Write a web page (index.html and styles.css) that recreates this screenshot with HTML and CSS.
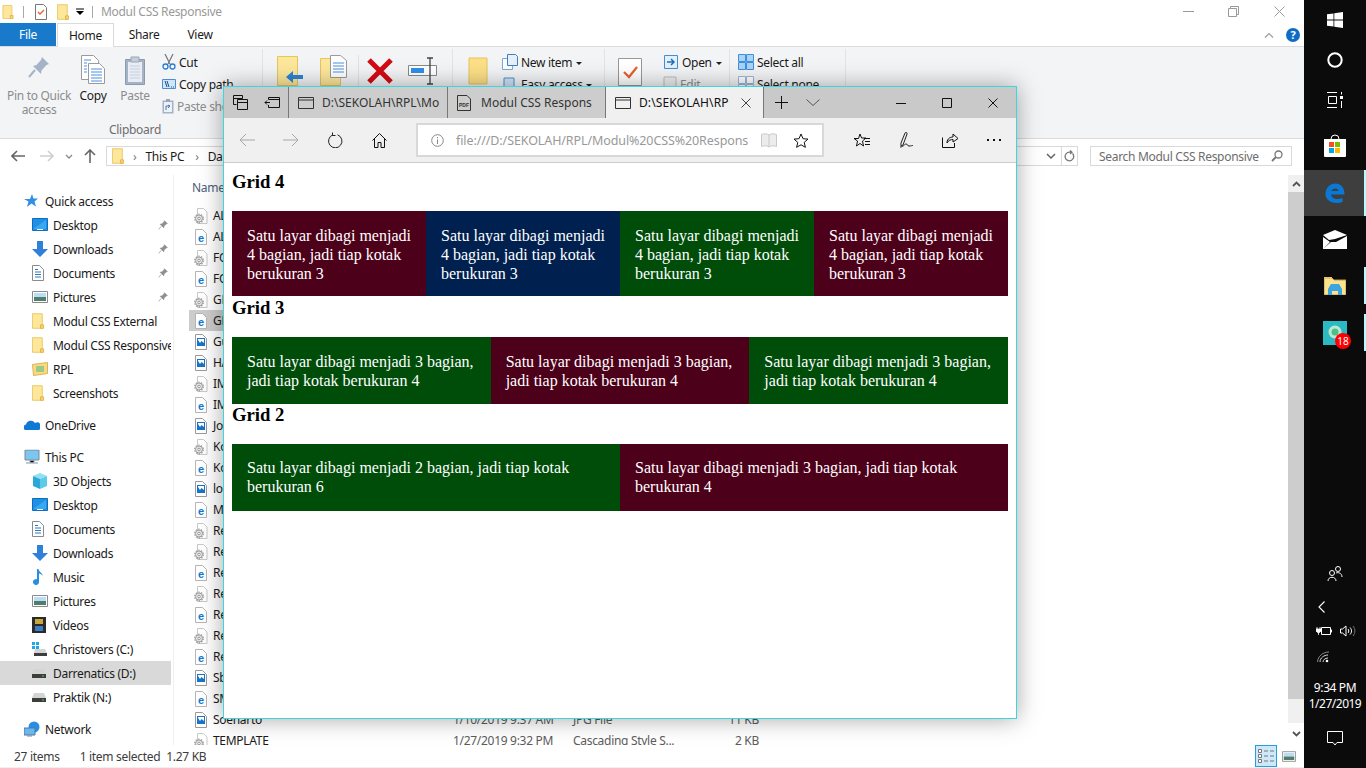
FILE: index.html
```html
<!DOCTYPE html>
<html lang="en">
<head>
<meta charset="utf-8">
<title>Modul CSS Responsive</title>
<link rel="stylesheet" href="styles.css">
</head>
<body>
<svg class="defs" width="0" height="0" aria-hidden="true">
  <symbol id="folder" viewBox="0 0 14 18"><path d="M.5.5h11.5v17H.5z" fill="#fde79b" stroke="#e8c35f"/><path d="M10 13.5h3.5v4H10z" fill="#fcd56b" stroke="#e0b040"/></symbol>
  <symbol id="gear" viewBox="0 0 14 16"><path d="M3.5.5h6l3.5 3.5v11.500H3.500z" fill="#fff" stroke="#c8c8c8"/><circle cx="5" cy="10.500" r="3.500" fill="#e8e8e8" stroke="#a0a0a0"/><circle cx="5" cy="10.500" r="4.300" fill="none" stroke="#9a9a9a" stroke-width="1.200" stroke-dasharray="1.500 1.200"/><circle cx="5" cy="10.500" r="1.300" fill="#fff" stroke="#999"/></symbol>
  <symbol id="edoc" viewBox="0 0 14 16"><path d="M1.500.5h7l4 4v11h-11z" fill="#fff" stroke="#b5b5b5"/><text x="7" y="12.500" text-anchor="middle" class="edoc-e">e</text></symbol>
  <symbol id="imgdoc" viewBox="0 0 14 16"><path d="M1.500.5h7l4 4v11h-11z" fill="#fff" stroke="#9a9a9a"/><path d="M3 4h8v8H3z" fill="#1a73c8"/><path d="M4 6l2 3 1.500-2L10 9V5H4z" fill="#fff"/></symbol>
  <symbol id="pin" viewBox="0 0 14 14"><path d="M9 1l4 4-1.500.5-3 3-.5 2.500-5-5 2.500-.5 3-3zM4.500 9L1 13" fill="#8f8f8f" stroke="#8f8f8f"/></symbol>
  <symbol id="monitor" viewBox="0 0 16 14"><path d="M.5.5h15v12H.5z" fill="#1e90e6" stroke="#0f6cbd"/><path d="M1 11l13-9v9z" fill="#3aa8f0"/><path d="M5 11.500h6" stroke="#fff"/></symbol>
  <symbol id="down" viewBox="0 0 16 16"><path d="M5 0h6v8h5l-8 8-8-8h5z" fill="#2f80d8"/></symbol>
  <symbol id="docs" viewBox="0 0 12 16"><path d="M.5.5h7l4 4v11H.5z" fill="#fff" stroke="#8a8a8a"/><path d="M3 7h6M3 9.500h6M3 12h6M3 4.500h3" stroke="#2f78c8"/></symbol>
  <symbol id="pics" viewBox="0 0 16 12"><path d="M.5.5h15v11H.5z" fill="#fff" stroke="#8a8a8a"/><path d="M2 2h12v4H2z" fill="#bcdcf5"/><path d="M2 6h12v4H2z" fill="#4f7f6a"/></symbol>
  <symbol id="drive" viewBox="0 0 14 10"><path d="M2 1h10l2 5H0z" fill="#d4d4d4"/><path d="M0 6h14v4H0z" fill="#3d3d3d"/><path d="M10 7.500h2v1h-2z" fill="#3be03b"/></symbol>
</svg>

<div class="desktop">
  <section class="explorer">
    <header class="qat">
      <svg class="qat-folder" width="12" height="14"><use href="#folder"/></svg>
      <span class="qat-sep"></span>
      <svg class="qat-check" width="12" height="16" viewBox="0 0 12 16"><path d="M.5.5h8l3 3v12H.5z" fill="#fff" stroke="#777"/><path d="M3 8l2 2 4-4" fill="none" stroke="#e8602c" stroke-width="1.300"/></svg>
      <svg class="qat-folder2" width="12" height="16"><use href="#folder"/></svg>
      <svg class="qat-drop" width="8" height="8" viewBox="0 0 8 8"><path d="M0 1h8" stroke="#000"/><path d="M0 3h8L4 7z" fill="#000"/></svg>
      <span class="qat-sep second"></span>
      <span class="qat-title">Modul CSS Responsive</span>
      <span class="win-ctrls">
        <span class="win-ctrl"><svg width="11" height="11" viewBox="0 0 11 11"><path d="M0 5.500h11" stroke="#9a9a9a"/></svg></span>
        <span class="win-ctrl"><svg width="11" height="11" viewBox="0 0 11 11"><path d="M.5 2.500h8v8h-8zM2.500 2.500v-2h8v8h-2" fill="none" stroke="#9a9a9a"/></svg></span>
        <span class="win-ctrl"><svg width="11" height="11" viewBox="0 0 11 11"><path d="M.5.500l10 10M10.500.500l-10 10" stroke="#9a9a9a"/></svg></span>
      </span>
    </header>

    <nav class="ribbon-tabs">
      <span class="rtab file-tab">File</span>
      <span class="rtab home">Home</span>
      <span class="rtab share">Share</span>
      <span class="rtab view">View</span>
      <span class="ribbon-right">
        <svg width="10" height="6" viewBox="0 0 10 6"><path d="M1 5.500l4-4 4 4" fill="none" stroke="#9a9a9a" stroke-width="1.200"/></svg>
        <span class="help">?</span>
      </span>
    </nav>

    <div class="ribbon">
      <div class="rgroup clip">
        <div class="rgroup-items">
          <div class="lbtn pin-btn disabled">
            <svg width="24" height="32" viewBox="0 0 24 32"><path d="M15 3l7 7-2.500 1-5 5.500-.5 3.500-8-8 3.500-1 4.500-5z" fill="#a5b3c6"/><path d="M8 16l-6 7" stroke="#a5b3c6" stroke-width="2"/></svg>
            <span class="lbl">Pin to Quick<br>access</span>
          </div>
          <div class="lbtn copy-btn">
            <svg width="26" height="32" viewBox="0 0 26 32"><path d="M1.500 1.500h12l5 5v19h-17z" fill="#fff" stroke="#9a9a9a"/><path d="M8.500 9.500h11l5 5v15h-16z" fill="#fff" stroke="#9a9a9a"/><path d="M4 6h7M4 9h3M4 12h3M4 15h3M4 18h3M11 15h11M11 18h11M11 21h11M11 24h11M11 27h11" stroke="#4a90e2"/></svg>
            <span class="lbl">Copy</span>
          </div>
          <div class="lbtn paste-btn disabled">
            <svg width="24" height="32" viewBox="0 0 24 32"><path d="M2.500 5.500h19v25h-19z" fill="#a5b3c6" stroke="#8c9ab0"/><path d="M5 8h14v20H5z" fill="#e9edf3"/><path d="M8 3h8v5H8z" fill="#c8ced8" stroke="#9aa6b8"/><path d="M7 12h10M7 15h10M7 18h10M7 21h10M7 24h10" stroke="#c3cfe0"/></svg>
            <span class="lbl">Paste</span>
          </div>
          <div class="small-col">
            <div class="sbtn"><svg width="14" height="16" viewBox="0 0 14 16"><path d="M3 0l5 10M11 0L6 10" stroke="#777" stroke-width="1.200"/><circle cx="3.500" cy="12.500" r="2.500" fill="none" stroke="#2a7bd0" stroke-width="1.300"/><circle cx="10.500" cy="12.500" r="2.500" fill="none" stroke="#2a7bd0" stroke-width="1.300"/></svg><span>Cut</span></div>
            <div class="sbtn"><svg width="14" height="10" viewBox="0 0 14 10"><path d="M.5.500h13v9H.5z" fill="#cfe5fa" stroke="#4a90d0"/><path d="M3 2l2 6M5 2l2 6M9 8h1M11 8h1" stroke="#1d4f86"/></svg><span>Copy path</span></div>
            <div class="sbtn disabled"><svg width="12" height="16" viewBox="0 0 12 16"><path d="M.5 2.500h11v13H.5z" fill="#a5b3c6"/><path d="M2 4h8v10H2z" fill="#eef1f5"/><path d="M4 1h4v3H4z" fill="#9aa6b8"/><path d="M4 12V8h4M6 7l2 1-2 2" fill="none" stroke="#3f78b8"/></svg><span>Paste shortcut</span></div>
          </div>
        </div>
        <div class="rgroup-label">Clipboard</div>
      </div>

      <div class="rgroup organize">
        <div class="rgroup-items icons-only">
          <svg class="move-ico" width="26" height="32" viewBox="0 0 26 32"><path d="M.5 1.500h20v29H.5z" fill="#fde79b" stroke="#e8c35f"/><path d="M9 22l7-6v4h10v4H16v4z" fill="#2a84d8"/></svg>
          <svg class="copyto-ico" width="28" height="32" viewBox="0 0 28 32"><path d="M.5 3.500h20v27H.5z" fill="#fde79b" stroke="#e8c35f"/><path d="M10.500 .5h10l6 5v17h-16z" fill="#fff" stroke="#9a9a9a"/><path d="M13 8h11M13 11h11M13 14h11M13 17h11" stroke="#4a90e2"/></svg>
          <span class="rsep"></span>
          <svg class="delete-ico" width="26" height="26" viewBox="0 0 26 26"><path d="M2 2l22 22M24 2L2 24" stroke="#d40a14" stroke-width="5"/></svg>
          <svg class="rename-ico" width="30" height="28" viewBox="0 0 30 28"><path d="M.5 8.500h28v10H.5z" fill="#fff" stroke="#888"/><path d="M3 11h13v5H3z" fill="#2f8fe8"/><path d="M19 1h6M19 27h6M22 1v26" stroke="#444" stroke-width="1.300"/></svg>
        </div>
      </div>

      <div class="rgroup new">
        <div class="rgroup-items">
          <svg class="newfolder-ico" width="20" height="28" viewBox="0 0 20 28"><path d="M1 1h18v26H1z" fill="#fcdf86" stroke="#e8c35f"/></svg>
          <div class="small-col">
            <div class="sbtn"><svg width="16" height="16" viewBox="0 0 16 16"><path d="M.5 4.500h8l2 2v9H.5z" fill="#fff" stroke="#7fa7cf"/><path d="M5.500.5h8l2 2v9h-10z" fill="#e6f0fa" stroke="#3f7fc0"/></svg><span>New item <i class="caret"></i></span></div>
            <div class="sbtn"><svg width="16" height="16" viewBox="0 0 16 16"><path d="M2 2h10v12H2z" fill="#cfe5fa" stroke="#4a90d0"/></svg><span>Easy access <i class="caret"></i></span></div>
          </div>
        </div>
      </div>

      <div class="rgroup open">
        <div class="rgroup-items">
          <svg class="props-ico" width="24" height="30" viewBox="0 0 24 30"><path d="M.5 1.500h23v27H.5z" fill="#fff" stroke="#999"/><path d="M6 15l5 5 8-10" fill="none" stroke="#e8602c" stroke-width="2.200"/></svg>
          <div class="small-col">
            <div class="sbtn"><svg width="16" height="16" viewBox="0 0 16 16"><path d="M1.500 1.500h13v13h-13z" fill="#e6f0fa" stroke="#3f8fdc"/><path d="M4 8h7M8 5l3 3-3 3" fill="none" stroke="#1d6fc0" stroke-width="1.500"/></svg><span>Open <i class="caret"></i></span></div>
            <div class="sbtn disabled"><svg width="14" height="16" viewBox="0 0 14 16"><path d="M1 1h12v14H1z" fill="#eee" stroke="#bbb"/></svg><span>Edit</span></div>
          </div>
        </div>
      </div>

      <div class="rgroup select">
        <div class="rgroup-items">
          <div class="small-col">
            <div class="sbtn"><svg width="16" height="16" viewBox="0 0 16 16"><path d="M.5.5h7v7h-7zM8.500.5h7v7h-7zM.5 8.500h7v7h-7zM8.500 8.500h7v7h-7z" fill="#a8d4f5" stroke="#3f8fdc"/></svg><span>Select all</span></div>
            <div class="sbtn"><svg width="16" height="16" viewBox="0 0 16 16"><path d="M.5.5h7v7h-7zM8.500.5h7v7h-7zM.5 8.500h7v7h-7zM8.500 8.500h7v7h-7z" fill="#fff" stroke="#9ab8d8"/></svg><span>Select none</span></div>
          </div>
        </div>
      </div>
    </div>

    <div class="addr-row">
      <svg class="a-back" width="14" height="12" viewBox="0 0 14 12"><path d="M6 1L1 6l5 5M1 6h13" fill="none" stroke="#666" stroke-width="1.600"/></svg>
      <svg class="a-fwd" width="14" height="12" viewBox="0 0 14 12"><path d="M8 1l5 5-5 5M13 6H0" fill="none" stroke="#d0d0d0" stroke-width="1.600"/></svg>
      <svg class="a-drop" width="8" height="5" viewBox="0 0 8 5"><path d="M1 1l3 3 3-3" fill="none" stroke="#888" stroke-width="1.300"/></svg>
      <svg class="a-up" width="12" height="14" viewBox="0 0 12 14"><path d="M1 6l5-5 5 5M6 1v13" fill="none" stroke="#666" stroke-width="1.600"/></svg>
      <div class="addr-box">
        <svg width="12" height="16"><use href="#folder"/></svg>
        <span class="crumb-sep">›</span><span class="crumb">This PC</span>
        <span class="crumb-sep two">›</span><span class="crumb">Darrenatics (D:)</span>
        <span class="addr-end">
          <svg width="10" height="6" viewBox="0 0 10 6"><path d="M1 1l4 4 4-4" fill="none" stroke="#666" stroke-width="1.500"/></svg>
          <span class="addr-refresh"><svg width="11" height="12" viewBox="0 0 11 12"><path d="M8.500 3.500a4.300 4.300 0 1 1-3-1.300H8M6 .5l2 1.700-2 1.700" fill="none" stroke="#777" stroke-width="1.300"/></svg></span>
        </span>
      </div>
      <div class="search-box">
        <span>Search Modul CSS Responsive</span>
        <svg width="12" height="12" viewBox="0 0 12 12"><circle cx="7.500" cy="4.500" r="3.500" fill="none" stroke="#777" stroke-width="1.300"/><path d="M5 7l-4 4" stroke="#777" stroke-width="1.800"/></svg>
      </div>
    </div>

    <div class="main">
      <aside class="nav">
        <div class="nav-row lvl1"><svg width="14" height="14" viewBox="0 0 14 14"><path d="M8 0l1.500 4.500H14l-3.500 3 1.500 5-4.500-3L3 13l1.500-5.500L0 5h6z" fill="#2f8fe0"/></svg><span>Quick access</span></div>
        <div class="nav-row"><svg width="16" height="14"><use href="#monitor"/></svg><span>Desktop</span><svg class="pinned" width="10" height="10"><use href="#pin"/></svg></div>
        <div class="nav-row"><svg width="16" height="16"><use href="#down"/></svg><span>Downloads</span><svg class="pinned" width="10" height="10"><use href="#pin"/></svg></div>
        <div class="nav-row"><svg width="12" height="16"><use href="#docs"/></svg><span>Documents</span><svg class="pinned" width="10" height="10"><use href="#pin"/></svg></div>
        <div class="nav-row"><svg width="16" height="12"><use href="#pics"/></svg><span>Pictures</span><svg class="pinned" width="10" height="10"><use href="#pin"/></svg></div>
        <div class="nav-row"><svg width="12" height="16"><use href="#folder"/></svg><span>Modul CSS External</span></div>
        <div class="nav-row"><svg width="12" height="16"><use href="#folder"/></svg><span>Modul CSS Responsive</span></div>
        <div class="nav-row"><svg width="16" height="14" viewBox="0 0 16 14"><path d="M.5 2.500l15-2v11l-14 2z" fill="#fbd97c" stroke="#d8b45c"/><path d="M4 4h8v6H4z" fill="#9cc987"/></svg><span>RPL</span></div>
        <div class="nav-row"><svg width="12" height="16"><use href="#folder"/></svg><span>Screenshots</span></div>

        <div class="nav-row lvl1 gap"><svg width="16" height="10" viewBox="0 0 16 10"><path d="M1 10a3 3 0 0 1 1-5.500A5 5 0 0 1 11 3a3.500 3.500 0 0 1 4 7z" fill="#0f78d4"/></svg><span>OneDrive</span></div>

        <div class="nav-row lvl1 gap"><svg width="16" height="15" viewBox="0 0 16 15"><path d="M1 .5h14v10H1z" fill="#7cc7f2" stroke="#7a8a99"/><path d="M6 11h4v2H6zM2 13.500h12" stroke="#8899a8"/></svg><span>This PC</span></div>
        <div class="nav-row"><svg width="16" height="16" viewBox="0 0 16 16"><path d="M8 0l7 3-7 3-7-3z" fill="#8fe0f0"/><path d="M1 3l7 3v10l-7-3z" fill="#2aa8d8"/><path d="M15 3L8 6v10l7-3z" fill="#5ccbe8"/></svg><span>3D Objects</span></div>
        <div class="nav-row"><svg width="16" height="14"><use href="#monitor"/></svg><span>Desktop</span></div>
        <div class="nav-row"><svg width="12" height="16"><use href="#docs"/></svg><span>Documents</span></div>
        <div class="nav-row"><svg width="16" height="16"><use href="#down"/></svg><span>Downloads</span></div>
        <div class="nav-row"><svg width="12" height="16" viewBox="0 0 12 16"><path d="M5 0h1.500c.5 3 4 4 4.500 7-1-1.500-3-2.500-4-2.500V13a3 3 0 1 1-2-2.800z" fill="#2a8ee0"/></svg><span>Music</span></div>
        <div class="nav-row"><svg width="16" height="12"><use href="#pics"/></svg><span>Pictures</span></div>
        <div class="nav-row"><svg width="14" height="16" viewBox="0 0 14 16"><path d="M0 0h14v16H0z" fill="#2b2b2b"/><path d="M3 2h8v5H3z" fill="#c9a83a"/><path d="M3 9h8v5H3z" fill="#3b7cc4"/></svg><span>Videos</span></div>
        <div class="nav-row"><svg width="16" height="14" viewBox="0 0 16 14"><path d="M0 0h3v3H0zM4 0h3v3H4zM0 4h3v3H0zM4 4h3v3H4z" fill="#1ea7e8"/><path d="M3 7h10l2 4H2z" fill="#d4d4d4"/><path d="M2 11h13v3H2z" fill="#3d3d3d"/></svg><span>Christovers (C:)</span></div>
        <div class="nav-row selected"><svg width="14" height="10"><use href="#drive"/></svg><span>Darrenatics (D:)</span></div>
        <div class="nav-row"><svg width="14" height="10"><use href="#drive"/></svg><span>Praktik (N:)</span></div>
        <div class="nav-row lvl1 gap"><svg width="16" height="16" viewBox="0 0 16 16"><circle cx="10" cy="6" r="5.500" fill="#2a8ee0"/><path d="M0 7h11v7H0z" fill="#6db6ec" stroke="#4a7aa8"/><path d="M3 15h5" stroke="#888"/></svg><span>Network</span></div>
      </aside>

      <div class="list">
        <div class="col-head">
          <span class="c-name">Name</span>
        </div>
        <div class="file"><svg width="14" height="16"><use href="#gear"/></svg><span class="c-name">AL</span></div>
        <div class="file"><svg width="14" height="16"><use href="#edoc"/></svg><span class="c-name">AL</span></div>
        <div class="file"><svg width="14" height="16"><use href="#gear"/></svg><span class="c-name">FO</span></div>
        <div class="file"><svg width="14" height="16"><use href="#edoc"/></svg><span class="c-name">FO</span></div>
        <div class="file"><svg width="14" height="16"><use href="#gear"/></svg><span class="c-name">GL</span></div>
        <div class="file sel"><svg width="14" height="16"><use href="#edoc"/></svg><span class="c-name">GL</span></div>
        <div class="file"><svg width="14" height="16"><use href="#imgdoc"/></svg><span class="c-name">Gu</span></div>
        <div class="file"><svg width="14" height="16"><use href="#imgdoc"/></svg><span class="c-name">HA</span></div>
        <div class="file"><svg width="14" height="16"><use href="#gear"/></svg><span class="c-name">IM</span></div>
        <div class="file"><svg width="14" height="16"><use href="#edoc"/></svg><span class="c-name">IM</span></div>
        <div class="file"><svg width="14" height="16"><use href="#imgdoc"/></svg><span class="c-name">Jo</span></div>
        <div class="file"><svg width="14" height="16"><use href="#gear"/></svg><span class="c-name">Ko</span></div>
        <div class="file"><svg width="14" height="16"><use href="#edoc"/></svg><span class="c-name">Ko</span></div>
        <div class="file"><svg width="14" height="16"><use href="#imgdoc"/></svg><span class="c-name">lo</span></div>
        <div class="file"><svg width="14" height="16"><use href="#edoc"/></svg><span class="c-name">M</span></div>
        <div class="file"><svg width="14" height="16"><use href="#gear"/></svg><span class="c-name">Re</span></div>
        <div class="file"><svg width="14" height="16"><use href="#gear"/></svg><span class="c-name">Re</span></div>
        <div class="file"><svg width="14" height="16"><use href="#edoc"/></svg><span class="c-name">Re</span></div>
        <div class="file"><svg width="14" height="16"><use href="#gear"/></svg><span class="c-name">Re</span></div>
        <div class="file"><svg width="14" height="16"><use href="#edoc"/></svg><span class="c-name">Re</span></div>
        <div class="file"><svg width="14" height="16"><use href="#gear"/></svg><span class="c-name">Re</span></div>
        <div class="file"><svg width="14" height="16"><use href="#edoc"/></svg><span class="c-name">Re</span></div>
        <div class="file"><svg width="14" height="16"><use href="#imgdoc"/></svg><span class="c-name">Sb</span></div>
        <div class="file"><svg width="14" height="16"><use href="#edoc"/></svg><span class="c-name">SM</span></div>
        <div class="file"><svg width="14" height="16"><use href="#imgdoc"/></svg><span class="c-name">Soenarto</span><span class="c-date">1/10/2019 9:37 AM</span><span class="c-type">JPG File</span><span class="c-size">11 KB</span></div>
        <div class="file"><svg width="14" height="16"><use href="#gear"/></svg><span class="c-name">TEMPLATE</span><span class="c-date">1/27/2019 9:32 PM</span><span class="c-type">Cascading Style S...</span><span class="c-size">2 KB</span></div>
      </div>

      <div class="scrollbar">
        <span class="sb-btn"><svg width="9" height="6" viewBox="0 0 9 6"><path d="M1 5l3.500-3.500L8 5" fill="none" stroke="#555" stroke-width="1.800"/></svg></span>
        <span class="sb-thumb"></span>
        <span class="sb-track"></span>
        <span class="sb-btn"><svg width="9" height="6" viewBox="0 0 9 6"><path d="M1 1l3.500 3.500L8 1" fill="none" stroke="#555" stroke-width="1.800"/></svg></span>
      </div>
    </div>

    <footer class="status">
      <span class="st-items">27 items</span>
      <span class="st-sel">1 item selected</span>
      <span class="st-size">1.27 KB</span>
      <span class="st-views">
        <span class="view-btn active"><svg width="16" height="14" viewBox="0 0 16 14"><path d="M.5.5h3v3h-3zM.5 5.500h3v3h-3zM.5 10.500h3v3h-3z" fill="#fff" stroke="#777"/><path d="M6 2h4M12 2h4M6 7h4M12 7h4M6 12h4M12 12h4" stroke="#777"/></svg></span>
        <span class="view-btn"><svg width="14" height="11"><use href="#pics"/></svg></span>
      </span>
    </footer>
  </section>

  <aside class="taskbar">
    <div class="tb-apps">
      <span class="tb-cell h40"><svg width="16" height="16" viewBox="0 0 16 16"><path d="M0 2.300l6.500-.9v6.200H0zM7.300 1.300L16 0v7.600H7.300zM0 8.400h6.500v6.200L0 13.700zM7.300 8.400H16V16l-8.700-1.300z" fill="#fff"/></svg></span>
      <span class="tb-cell h40"><svg width="16" height="16" viewBox="0 0 16 16"><circle cx="8" cy="8" r="6.700" fill="none" stroke="#fff" stroke-width="2"/></svg></span>
      <span class="tb-cell h40"><svg width="16" height="16" viewBox="0 0 16 16"><path d="M0 .5h10M0 15.500h10M1.500 4.500h8v7h-8z" fill="none" stroke="#fff"/><path d="M13 4h3v3h-3z" fill="#fff"/><path d="M14.500 0v2.500M14.500 9v7" stroke="#fff"/></svg></span>
      <span class="tb-cell h50"><svg width="24" height="24" viewBox="0 0 24 24"><path d="M8 6a4 4 0 0 1 8 0" fill="none" stroke="#fff"/><path d="M1 6h22v17a1 1 0 0 1-1 1H2a1 1 0 0 1-1-1z" fill="#fff"/><path d="M6 9h5v5H6z" fill="#f25022"/><path d="M12 9h5v5h-5z" fill="#7fba00"/><path d="M6 15h5v5H6z" fill="#00a4ef"/><path d="M12 15h5v5h-5z" fill="#ffb900"/></svg></span>
      <span class="tb-cell h46 current"><span class="tb-ind full"></span><svg width="20" height="20" viewBox="0 0 20 20"><path d="M19.500 11.500H6c.3 3.500 5.500 6 11.500 3.500v4c-6 2.500-17 .5-17-8C.5 5 5 .5 10 .5c6 0 9.500 4 9.500 11zM6.200 8h7.300c0-3.500-6-3.500-7.300 0z" fill="#0a78d7"/></svg></span>
      <span class="tb-cell h46"><svg width="24" height="19" viewBox="0 0 24 19"><path d="M0 5l12-5 12 5-12 4-6 1z" fill="#fff"/><path d="M0 7l7 5-7 7zM24 6v13H0l8-7 5 0z" fill="#fff"/></svg></span>
      <span class="tb-cell h47"><span class="tb-ind"></span><svg width="22" height="18" viewBox="0 0 22 18"><path d="M0 1h8l2 2h12v15H0z" fill="#fce28c" stroke="#b89a4a"/><path d="M0 0h8v2H0z" fill="#e8c35f"/><path d="M4 12l3-5h8l3 5v6h-4v-4H8v4H4z" fill="#3aa5e0"/></svg></span>
      <span class="tb-cell h47"><span class="tb-ind"></span><span class="wa"><svg width="24" height="24" viewBox="0 0 24 24"><path d="M0 0h24v24H0z" fill="#2bbac4"/><circle cx="12" cy="11" r="6.500" fill="#bfe8d4"/><circle cx="12" cy="11" r="3.500" fill="#4cc08a"/></svg><span class="badge">18</span></span></span>
    </div>
    <div class="tb-tray">
      <span class="tray-people"><svg width="16" height="16" viewBox="0 0 16 16"><circle cx="5" cy="7" r="2.500" fill="none" stroke="#fff"/><circle cx="11" cy="3" r="2.500" fill="none" stroke="#fff"/><path d="M1 15c0-5 8-5 8 0M9 7c2-1 6 0 6 4" fill="none" stroke="#fff"/></svg></span>
      <span class="tray-chevron"><svg width="7" height="12" viewBox="0 0 7 12"><path d="M6.500.5L1 6l5.500 5.500" fill="none" stroke="#fff" stroke-width="1.100"/></svg></span>
      <span class="tray-pair">
        <svg width="16" height="10" viewBox="0 0 16 10"><path d="M5.500 1.500h9v7h-9z" fill="none" stroke="#fff"/><path d="M15 4h1v2h-1zM1 1v2M4 1v2M0 3h5v2l-1.500 1.500h-2L0 5zM2.500 6.500V9" fill="#fff" stroke="#fff" stroke-width=".8"/></svg>
        <svg width="16" height="12" viewBox="0 0 16 12"><path d="M.5 4h2L6 1v10L2.500 8h-2z" fill="none" stroke="#fff"/><path d="M8 4c1 1 1 3 0 4M10 2.500c2 2 2 5 0 7" fill="none" stroke="#fff"/><path d="M13 1c2.500 3 2.500 7 0 10" fill="none" stroke="#777"/></svg>
      </span>
      <span class="tray-wifi"><svg width="13" height="12" viewBox="0 0 13 12"><path d="M.5 11C1 5 6 1 12 1" fill="none" stroke="#888"/><path d="M3 11c0-4 4-7 8-7M6 11c0-2 2-4 5-4" fill="none" stroke="#ddd"/><circle cx="10" cy="10" r="1.300" fill="#fff"/></svg></span>
      <span class="tray-time">9:34 PM</span>
      <span class="tray-date">1/27/2019</span>
      <span class="tray-notif"><svg width="16" height="15" viewBox="0 0 16 15"><path d="M.5.5h15v11H10l-2 2.500-2-2.500H.5z" fill="none" stroke="#fff"/></svg></span>
    </div>
  </aside>

  <section class="edge">
    <div class="e-tabs">
      <span class="e-mini"><svg width="15" height="15" viewBox="0 0 15 15"><path d="M.5.5h9v3h-9zM.5 3.500v6h3M4.500 4.500h10v10h-10zM4.500 7.500h10" fill="none" stroke="#111"/></svg></span>
      <span class="e-mini last"><svg width="16" height="11" viewBox="0 0 16 11"><path d="M4.500 2.500V.5h11v10h-11V8M6 5.500H1M3 3.500l-2 2 2 2M4.500 2.500h11" fill="none" stroke="#111"/></svg></span>
      <span class="e-tab first"><svg class="page-ico" width="16" height="12" viewBox="0 0 16 12"><path d="M.5.5h15v11H.5zM.5 3h15" fill="none" stroke="#333"/></svg><span class="e-tab-text">D:\SEKOLAH\RPL\Mo</span></span>
      <span class="e-tab pdf"><svg class="page-ico" width="14" height="16" viewBox="0 0 14 16"><path d="M3 .5h7l3.500 3.500v11.500H.5V.5z" fill="none" stroke="#333"/><text x="7" y="11.500" text-anchor="middle" class="pdf-mark">PDF</text></svg><span class="e-tab-text">Modul CSS Respons</span></span>
      <span class="e-tab active"><svg class="page-ico" width="16" height="12" viewBox="0 0 16 12"><path d="M.5.5h15v11H.5zM.5 3h15" fill="none" stroke="#333"/></svg><span class="e-tab-text">D:\SEKOLAH\RP</span><svg class="tab-x" width="10" height="10" viewBox="0 0 10 10"><path d="M.5.5l9 9M9.500.5l-9 9" stroke="#444"/></svg></span>
      <span class="e-new"><svg width="13" height="13" viewBox="0 0 13 13"><path d="M6.500 0v13M0 6.500h13" stroke="#111"/></svg></span>
      <span class="e-list"><svg width="14" height="7" viewBox="0 0 14 7"><path d="M.5.5L7 6.500 13.500.5" fill="none" stroke="#555"/></svg></span>
      <span class="e-ctrls">
        <span class="e-ctrl"><svg width="10" height="10" viewBox="0 0 10 10"><path d="M0 5.500h10" stroke="#111"/></svg></span>
        <span class="e-ctrl"><svg width="10" height="10" viewBox="0 0 10 10"><path d="M.5.5h9v9h-9z" fill="none" stroke="#111"/></svg></span>
        <span class="e-ctrl"><svg width="10" height="10" viewBox="0 0 10 10"><path d="M.5.5l9 9M9.500.5l-9 9" stroke="#111"/></svg></span>
      </span>
    </div>

    <div class="e-bar">
      <span class="e-btn"><svg width="16" height="14" viewBox="0 0 16 14"><path d="M7 1L1 7l6 6M1 7h15" fill="none" stroke="#a8a8a8"/></svg></span>
      <span class="e-btn"><svg width="16" height="14" viewBox="0 0 16 14"><path d="M9 1l6 6-6 6M15 7H0" fill="none" stroke="#a8a8a8"/></svg></span>
      <span class="e-btn"><svg width="15" height="16" viewBox="0 0 15 16"><path d="M9.500 2.300A6.700 6.700 0 1 1 5 2.300M4.500 0v3h3" fill="none" stroke="#222" transform="translate(0 .5)"/></svg></span>
      <span class="e-btn"><svg width="15" height="15" viewBox="0 0 15 15"><path d="M.5 7.500l7-7 7 7M2.500 6v8.500h3.500v-5h3v5h3.500V6" fill="none" stroke="#111"/></svg></span>
      <div class="e-addr">
        <svg width="13" height="13" viewBox="0 0 13 13"><circle cx="6.500" cy="6.500" r="5.800" fill="none" stroke="#888"/><path d="M6.500 5.500v4.500M6.500 3v1.300" stroke="#888"/></svg>
        <span class="e-url">file:///D:/SEKOLAH/RPL/Modul%20CSS%20Respons</span>
        <svg class="e-read" width="16" height="15" viewBox="0 0 16 15"><path d="M.5 1.500C3 .5 6 .5 8 2c2-1.500 5-1.500 7.500-.5v12C13 12.500 10 12.500 8 14c-2-1.500-5-1.500-7.500-.5zM8 2v12" fill="#ececec" stroke="#c8c8c8"/></svg>
        <svg class="e-star" width="16" height="15" viewBox="0 0 16 15"><path d="M8 1l2 4.700 5 .4-3.800 3.300 1.200 4.900L8 11.800 3.600 14.300l1.200-4.900L1 6.100l5-.4z" fill="none" stroke="#111"/></svg>
      </div>
      <span class="e-tools">
        <span class="e-btn"><svg width="16" height="15" viewBox="0 0 16 15"><path d="M6 1l1.600 4H12L8.500 8l1 5L6 10.500 2.500 13l1-5L0 5.500h4.500zM10 5.500h6M11 8.500h5M11 11.500h5" fill="none" stroke="#111"/></svg></span>
        <span class="e-btn"><svg width="16" height="16" viewBox="0 0 16 16"><path d="M7 1c1-1 2.500-.5 2 1L5 13l-2 1 0-3zM2 15c4 0 4-3 6-3s1 2 3 2 3-.5 4-.5" fill="none" stroke="#222"/></svg></span>
        <span class="e-btn"><svg width="16" height="15" viewBox="0 0 16 15"><path d="M.5 4.500v10h12V10M5 10c0-5 4-6 6-6V1l5 4.500L11 9V6.500C9 6.500 6.500 7 5 10z" fill="none" stroke="#111"/></svg></span>
        <span class="e-btn"><svg width="16" height="4" viewBox="0 0 16 4"><path d="M1 1h2v2H1zM7 1h2v2H7zM13 1h2v2h-2z" fill="#111"/></svg></span>
      </span>
    </div>

    <main class="e-page">
      <h3>Grid 4</h3>
      <div class="row g4">
        <div class="cell maroon">Satu layar dibagi menjadi 4 bagian, jadi tiap kotak berukuran 3</div>
        <div class="cell navy">Satu layar dibagi menjadi 4 bagian, jadi tiap kotak berukuran 3</div>
        <div class="cell green">Satu layar dibagi menjadi 4 bagian, jadi tiap kotak berukuran 3</div>
        <div class="cell maroon">Satu layar dibagi menjadi 4 bagian, jadi tiap kotak berukuran 3</div>
      </div>
      <h3>Grid 3</h3>
      <div class="row g3">
        <div class="cell green">Satu layar dibagi menjadi 3 bagian, jadi tiap kotak berukuran 4</div>
        <div class="cell maroon">Satu layar dibagi menjadi 3 bagian, jadi tiap kotak berukuran 4</div>
        <div class="cell green">Satu layar dibagi menjadi 3 bagian, jadi tiap kotak berukuran 4</div>
      </div>
      <h3>Grid 2</h3>
      <div class="row g2">
        <div class="cell green">Satu layar dibagi menjadi 2 bagian, jadi tiap kotak berukuran 6</div>
        <div class="cell maroon">Satu layar dibagi menjadi 3 bagian, jadi tiap kotak berukuran 4</div>
      </div>
    </main>
  </section>
</div>
</body>
</html>
```

FILE: styles.css
```css
* { box-sizing: border-box; }
html, body { margin: 0; height: 100%; overflow: hidden; }
body { font-family: "Noto Sans", "Open Sans", sans-serif; font-size: 12px; letter-spacing: -.3px; color: #1a1a1a; background: #fff; }
svg { display: block; flex: none; }
.defs { position: absolute; }
.edoc-e { font: bold 11px "Liberation Sans", sans-serif; fill: #0f78d4; }
.pdf-mark { font: bold 5px "Liberation Sans", sans-serif; letter-spacing: 0; fill: #333; }

.desktop { position: relative; display: flex; width: 1366px; height: 768px; }
.explorer { width: 1304px; height: 768px; display: flex; flex-direction: column; background: #fff; overflow: hidden; }

/* quick access title row */
.qat { height: 23px; display: flex; align-items: center; padding-left: 2px; flex: none; }
.qat-sep { width: 1px; height: 12px; background: #a8a8a8; margin-left: 9px; }
.qat-check { margin-left: 11px; }
.qat-folder2 { margin-left: 10px; }
.qat-drop { margin-left: 7px; }
.qat-sep.second { margin-left: 8px; }
.qat-title { margin-left: 8px; color: #999; white-space: nowrap; }
.win-ctrls { margin-left: auto; display: flex; padding-right: 2px; }
.win-ctrl { width: 45.500px; height: 22px; display: flex; align-items: center; justify-content: center; }

.ribbon-tabs { height: 24px; display: flex; align-items: stretch; flex: none; border-bottom: 1px solid #dadbdc; }
.rtab { display: flex; align-items: center; justify-content: center; height: 23px; }
.rtab.file-tab { width: 56px; background: #1979ca; color: #fff; margin-right: 1px; }
.rtab.home { width: 57px; height: 24px; background: #fff; border: 1px solid #dadbdc; border-bottom: 0; }
.rtab.share { width: 60px; }
.rtab.view { width: 52px; }
.ribbon-right { margin-left: auto; display: flex; align-items: center; gap: 12px; padding-right: 4px; }
.help { width: 14px; height: 14px; border-radius: 50%; background: #0f6cc4; color: #fff; font-weight: 700; font-size: 11px; line-height: 14px; text-align: center; }

.ribbon { height: 92px; flex: none; display: flex; background: #f3f4f6; border-bottom: 1px solid #dadbdc; }
.rgroup { display: flex; flex-direction: column; border-right: 1px solid #e2e3e5; height: 86px; margin-top: 2px; }
.rgroup.clip { height: 89px; width: 263px; padding-left: 8px; }
.rgroup-items { display: flex; flex: 1; min-height: 0; }
.rgroup-label { height: 17px; text-align: center; color: #6d6d6d; line-height: 18px; }
.rgroup.organize { width: 190px; }
.rgroup.new { width: 152px; }
.rgroup.open { width: 125px; }
.rgroup.select { width: 116px; }
.lbtn { display: flex; flex-direction: column; align-items: center; padding-top: 5px; text-align: center; }
.lbtn .lbl { line-height: 14px; margin-top: 3px; white-space: nowrap; }
.disabled { color: #8c8c8c; }
.pin-btn { width: 62px; }
.copy-btn { width: 46px; }
.paste-btn { width: 38px; }
.small-col { display: flex; flex-direction: column; padding-top: 2px; }
.clip .small-col { margin-left: 8px; }
.sbtn { height: 22px; display: flex; align-items: center; gap: 3px; white-space: nowrap; }
.sbtn > svg { flex: none; }
.caret { display: inline-block; border: 3px solid transparent; border-top-color: #222; border-bottom: 0; vertical-align: middle; margin-left: 1px; }
.icons-only { align-items: flex-start; padding-top: 6px; }
.move-ico { margin-left: 14px; }
.copyto-ico { margin-left: 17px; }
.rsep { width: 1px; height: 40px; background: #e0e1e3; margin-left: 10px; }
.delete-ico { margin: 3px 0 0 8px; }
.rename-ico { margin: 2px 0 0 15px; }
.newfolder-ico { margin: 8px 0 0 15px; }
.new .small-col { margin-left: 14px; }
.props-ico { margin: 8px 0 0 13px; }
.open .small-col { margin-left: 21px; }
.select .small-col { margin-left: 8px; }

.addr-row { height: 36px; flex: none; display: flex; align-items: center; padding: 0 0 2px 11px; }
.a-fwd { margin-left: 15px; }
.a-drop { margin-left: 11px; }
.a-up { margin-left: 11px; }
.addr-box { width: 972px; height: 20px; margin-left: 10px; border: 1px solid #d9d9d9; display: flex; align-items: center; padding-left: 5px; white-space: nowrap; }
.crumb-sep { margin: 0 9px 0 9px; color: #777; }
.crumb-sep.two { margin-left: 11px; }
.addr-end { margin-left: auto; display: flex; align-items: center; height: 100%; gap: 5px; }
.addr-refresh { width: 16px; height: 100%; border-left: 1px solid #d9d9d9; display: flex; align-items: center; justify-content: center; }
.search-box { width: 202px; height: 20px; margin-left: 12px; border: 1px solid #d9d9d9; display: flex; align-items: center; justify-content: space-between; padding: 0 8px; color: #6d6d6d; white-space: nowrap; }

.main { flex: 1; min-height: 0; display: flex; overflow: hidden; }
.nav { width: 174px; flex: none; padding-top: 14px; border-right: 1px solid #f0f0f0; overflow: hidden; margin-right: 15px; }
.nav-row { height: 24px; display: flex; align-items: center; padding-left: 32px; width: 171px; position: relative; white-space: nowrap; overflow: hidden; }
.nav-row > svg:first-child { position: absolute; left: 32px; top: 50%; transform: translateY(-50%); }
.nav-row > span { margin-left: 21px; }
.nav-row.lvl1 { padding-left: 24px; }
.nav-row.lvl1 > svg:first-child { left: 24px; }
.nav-row.gap { margin-top: 8px; }
.nav-row.selected { background: #d9d9d9; }
.pinned { position: absolute; left: 158px; top: 7px; }

.list { flex: 1; min-width: 0; height: 570px; overflow: hidden; }
.col-head { height: 30px; display: flex; align-items: center; padding: 0 0 6px 3px; color: #4c607a; }
.file { height: 21px; display: flex; align-items: center; padding-left: 5px; white-space: nowrap; position: relative; width: 1099px; }
.file.sel { background: linear-gradient(to right, #ccc 240px, transparent 240px); }
.file .c-name { margin-left: 5px; width: 240px; }
.file .c-date { position: absolute; left: 264px; color: #5c5c5c; }
.file .c-type { position: absolute; left: 384px; color: #5c5c5c; }
.file .c-size { position: absolute; right: 529px; color: #5c5c5c; }

.scrollbar { width: 16px; flex: none; display: flex; flex-direction: column; background: #f0f0f0; margin-right: 0; }
.sb-btn { height: 17px; display: flex; align-items: center; justify-content: center; flex: none; }
.sb-thumb { height: 507px; background: #cdcdcd; flex: none; }
.sb-track { flex: 1; }
.scrollbar .sb-btn:last-child { height: 22px; background: #fff; }

.status { height: 23px; flex: none; display: flex; align-items: center; padding-left: 14px; color: #3c3c3c; border-bottom: 1px solid #f0f0f0; }
.st-sel { margin-left: 20px; }
.st-size { margin-left: 6px; }
.st-views { margin-left: auto; display: flex; align-items: center; gap: 4px; padding-right: 8px; }
.view-btn { width: 15px; height: 20px; display: flex; align-items: center; justify-content: center; }
.view-btn.active { width: 22px; height: 22px; background: #cde8f9; border: 1px solid #26a0da; }

/* taskbar */
.taskbar { width: 62px; height: 768px; background: #0b0b0b; display: flex; flex-direction: column; justify-content: space-between; color: #fff; flex: none; }
.tb-apps { display: flex; flex-direction: column; }
.tb-cell { position: relative; display: flex; align-items: center; justify-content: center; }
.h40 { height: 40px; }
.h50 { height: 50px; }
.h46 { height: 46px; }
.h47 { height: 47px; }
.tb-cell.current { background: #3e3e3e; }
.tb-ind { position: absolute; right: 0; top: 5px; width: 2px; height: 37px; background: #b4fbff; }
.tb-ind.full { top: 0; height: 100%; }
.wa { position: relative; display: block; }
.badge { position: absolute; right: -4px; bottom: -4px; width: 16px; height: 16px; border-radius: 50%; background: #f00; color: #fff; font-size: 10px; letter-spacing: 0; line-height: 16px; text-align: center; }
.tb-tray { display: flex; flex-direction: column; align-items: center; font-size: 12px; }
.tray-people { margin-bottom: 19px; }
.tray-chevron { align-self: flex-start; margin: 0 0 12px 14px; }
.tray-pair { display: flex; gap: 8px; align-items: center; margin-bottom: 14px; padding-left: 2px; }
.tray-wifi { align-self: flex-start; margin: 0 0 17px 13px; }
.tray-time { line-height: 16px; letter-spacing: -.4px; }
.tray-date { line-height: 16px; margin-bottom: 19px; letter-spacing: -.5px; }
.tray-notif { margin-bottom: 22px; }

/* browser window, floats over the explorer */
.edge { position: absolute; left: 223px; top: 86px; width: 794px; height: 633px; background: #fff; border: 1px solid #3ad7e0; box-shadow: 0 0 22px rgba(0, 0, 0, .35); display: flex; flex-direction: column; }
.e-tabs { height: 31px; flex: none; display: flex; background: #c9c9c9; align-items: stretch; }
.e-mini { width: 32px; display: flex; align-items: center; justify-content: center; }
.e-mini.last { width: 33px; border-right: 1px solid #777; }
.e-tab { width: 158px; background: #cdcdcd; border-right: 1px solid #777; display: flex; align-items: center; padding-left: 9px; overflow: hidden; white-space: nowrap; color: #333; letter-spacing: 0; }
.e-tab.first { width: 159px; }
.page-ico { flex: none; }
.e-tab-text { margin-left: 8px; overflow: hidden; flex: 1; margin-right: 5px; }
.e-tab.pdf .e-tab-text { margin-left: 10px; margin-right: 0; }
.e-tab.active { background: #f0f0f0; color: #111; }
.e-tab.active .e-tab-text { flex: none; width: 97px; margin-right: 5px; letter-spacing: .1px; }
.tab-x { flex: none; }
.e-new { width: 35px; display: flex; align-items: center; justify-content: center; }
.e-list { width: 28px; display: flex; align-items: center; justify-content: center; }
.e-ctrls { margin-left: auto; display: flex; }
.e-ctrl { width: 46px; display: flex; align-items: center; justify-content: center; }

.e-bar { height: 45px; flex: none; background: #f0f0f0; border-bottom: 1px solid #ccc; display: flex; align-items: center; padding-left: 1px; }
.e-btn { width: 44px; height: 34px; display: flex; align-items: center; justify-content: center; flex: none; }
.e-addr { width: 408px; height: 34px; margin-left: 15px; background: #fff; border: 2px solid #d8d8d8; display: flex; align-items: center; padding-left: 13px; white-space: nowrap; }
.e-url { margin-left: 12px; color: #999; width: 295px; overflow: hidden; font-size: 12.500px; letter-spacing: -.1px; }
.e-read { margin-left: 10px; }
.e-star { margin-left: 16px; }
.e-tools { margin-left: 16px; display: flex; }

.e-page { flex: 1; padding: 8px; font-family: "Liberation Serif", serif; font-size: 16px; letter-spacing: 0; color: #000; background: #fff; }
.e-page h3 { margin: 0 0 19px; font-size: 18.720px; line-height: 21.400px; font-weight: 700; }
.g4 + h3 { padding-top: .3px; }
.row { display: flex; }
.cell { flex: 1 1 0; color: #fff; line-height: 19px; }
.g4 .cell { padding: 14.600px 15px 13.400px; }
.g3 .cell { padding: 15px 15px 13.700px; }
.g2 .cell { padding: 14px 15px 15px; }
.maroon { background: #4d001a; }
.navy { background: #002050; }
.green { background: #004d0a; }
```
